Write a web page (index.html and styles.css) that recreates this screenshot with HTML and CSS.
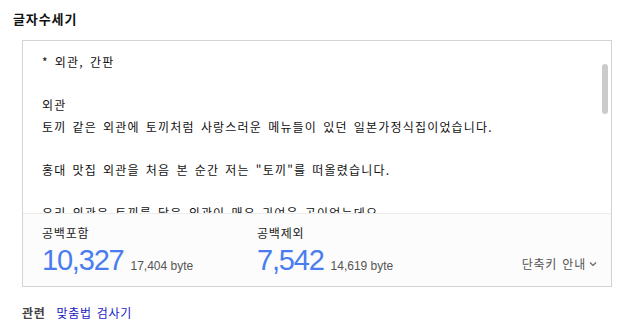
FILE: index.html
```html
<!DOCTYPE html>
<html lang="ko">
<head>
<meta charset="utf-8">
<link rel="stylesheet" href="styles.css">
</head>
<body>
<div class="page">
  <h2 class="title">글자수세기</h2>
  <div class="box">
    <div class="editor">
      <div class="text">
        <p>* 외관, 간판</p>
        <p>&nbsp;</p>
        <p>외관</p>
        <p>토끼 같은 외관에 토끼처럼 사랑스러운 메뉴들이 있던 일본가정식집이었습니다.</p>
        <p>&nbsp;</p>
        <p>홍대 맛집 외관을 처음 본 순간 저는 "토끼"를 떠올렸습니다.</p>
        <p>&nbsp;</p>
        <p>우리 외관은 토끼를 닮은 외관이 매우 귀여운 곳이었는데요</p>
      </div>
      <div class="thumb"></div>
    </div>
    <div class="stats">
      <div class="stat">
        <div class="label">공백포함</div>
        <div class="value"><span class="num">10,327</span><span class="byte">17,404 byte</span></div>
      </div>
      <div class="stat">
        <div class="label">공백제외</div>
        <div class="value"><span class="num">7,542</span><span class="byte">14,619 byte</span></div>
      </div>
      <div class="shortcut">단축키 안내<svg class="chev" width="8" height="6" viewBox="0 0 8 6"><path d="M1 1.5 L4 4.5 L7 1.5" fill="none" stroke="#666" stroke-width="1.2"/></svg></div>
    </div>
  </div>
  <div class="related"><span class="rel-label">관련</span><a class="rel-link" href="#">맞춤법 검사기</a></div>
</div>
</body>
</html>
```
FILE: styles.css
```css
html, body { margin: 0; padding: 0; background: #fff; }
body { font-family: "Noto Sans CJK KR", "Liberation Sans", sans-serif; color: #111; }
.page { padding: 10px 26px 0 13px; }
.title { margin: 0; font-size: 13px; font-weight: bold; line-height: 18px; color: #111; letter-spacing: 0.9px; }
.box { margin: 12px 0 0 9px; width: 588px; border: 1px solid #d3d3d3; }
.editor { position: relative; height: 172px; overflow: hidden; background: #fff; }
.text { padding: 10px 20px 0 19px; font-size: 12px; line-height: 21.5px; color: #111; letter-spacing: 1.2px; word-spacing: 1.5px; }
.text p { margin: 0; white-space: nowrap; }
.thumb { position: absolute; right: 3px; top: 23px; width: 6px; height: 50px; border-radius: 3px; background: #cbcbcb; }
.stats { display: flex; align-items: flex-end; border-top: 1px solid #ececec; background: #fcfcfc; height: 73px; padding: 0 14px 0 19px; box-sizing: border-box; }
.stat { width: 215px; padding-bottom: 9px; }
.label { font-size: 12px; line-height: 16px; color: #222; margin-bottom: 2px; letter-spacing: 0.8px; }
.value { display: flex; align-items: baseline; }
.num { font-family: "Liberation Sans", sans-serif; font-size: 29px; line-height: 34px; color: #4a7cf0; letter-spacing: -1.2px; }
.byte { font-family: "Liberation Sans", sans-serif; font-size: 12px; color: #555; margin-left: 7px; }
.shortcut { margin-left: auto; padding-bottom: 14px; font-size: 12px; color: #555; display: flex; align-items: center; gap: 3px; letter-spacing: 0.8px; word-spacing: 1px; }
.chev { display: block; }
.related { margin: 18px 0 0 9px; font-size: 12px; line-height: 16px; letter-spacing: 0.7px; word-spacing: 1px; }
.rel-label { font-weight: bold; color: #444; margin-right: 11px; }
.rel-link { color: #1a1ac8; text-decoration: none; }
```
